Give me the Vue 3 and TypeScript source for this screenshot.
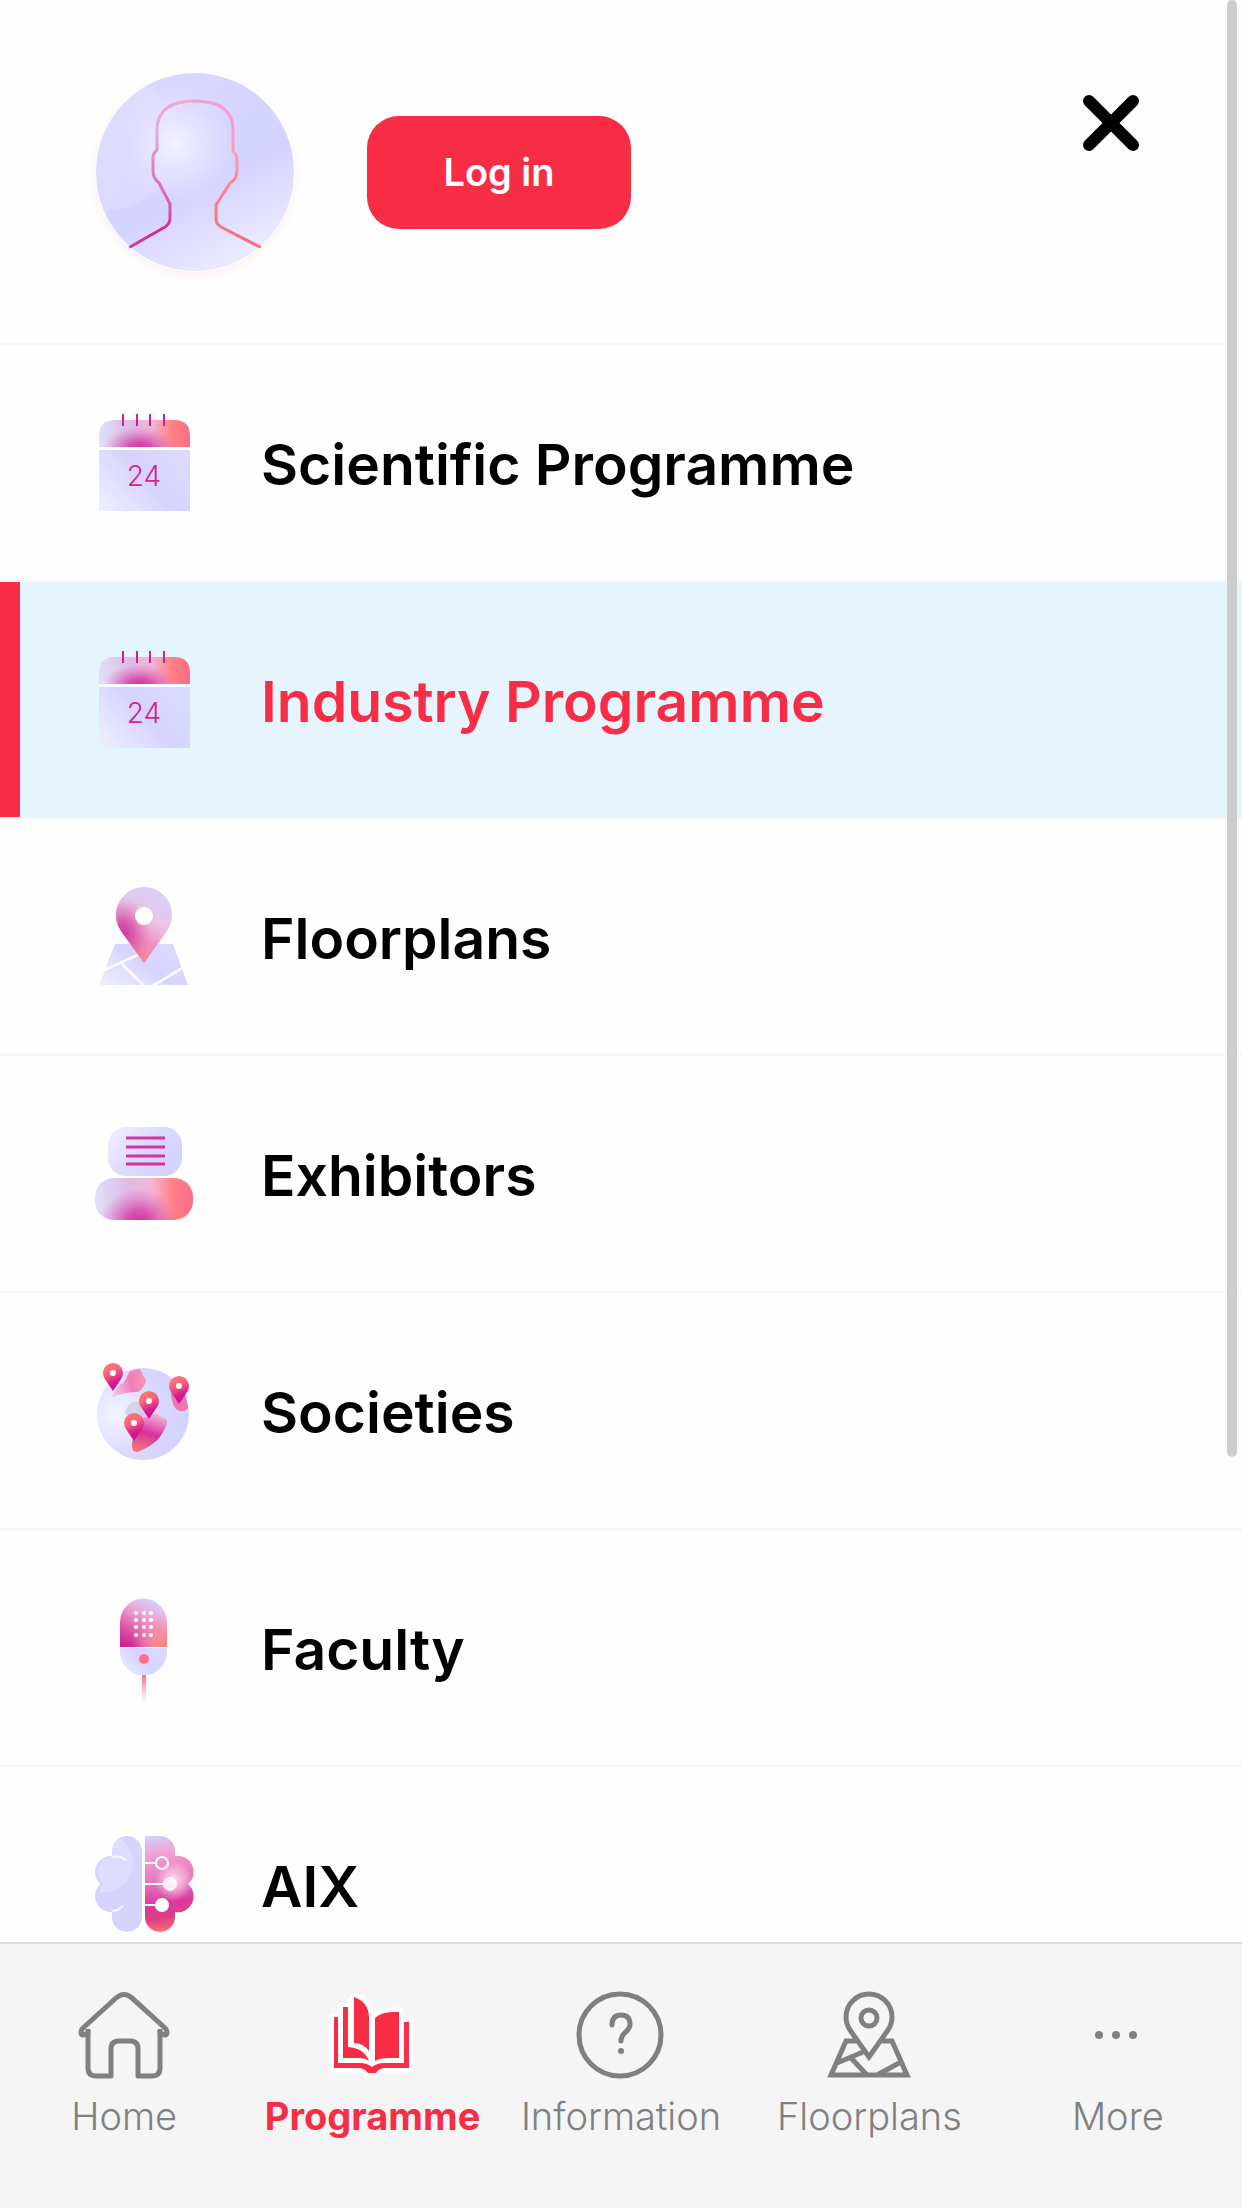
<script setup lang="ts">
import { ref } from 'vue'

interface MenuItem {
  label: string
  icon: string
}

const menu: MenuItem[] = [
  { label: 'Scientific Programme', icon: 'calendar' },
  { label: 'Industry Programme', icon: 'calendar' },
  { label: 'Floorplans', icon: 'map' },
  { label: 'Exhibitors', icon: 'booth' },
  { label: 'Societies', icon: 'globe' },
  { label: 'Faculty', icon: 'mic' },
  { label: 'AIX', icon: 'brain' },
]

const tabs = ['Home', 'Programme', 'Information', 'Floorplans', 'More']

const selected = ref('Industry Programme')
const activeTab = ref('Programme')

const micRows = [19, 26, 33, 41]
const micCols = [46, 54, 61]
const globePins = [
  [23, 16],
  [89, 29],
  [59, 44],
  [44, 66],
]
</script>

<template>
  <div class="app">
    <svg class="defs" aria-hidden="true">
      <defs>
        <linearGradient id="lilac" x1="0" y1="1" x2="1" y2="0.4">
          <stop offset="0" stop-color="#f0f0ff" />
          <stop offset="0.6" stop-color="#d6d4ff" />
          <stop offset="1" stop-color="#dad9ff" />
        </linearGradient>
        <linearGradient id="lilacTop" x1="0" y1="0" x2="1" y2="0.6">
          <stop offset="0" stop-color="#f1f1ff" />
          <stop offset="0.6" stop-color="#dad9ff" />
          <stop offset="1" stop-color="#d4d2ff" />
        </linearGradient>
        <linearGradient id="flare" x1="0" y1="0" x2="1" y2="0">
          <stop offset="0" stop-color="#dfe0f8" />
          <stop offset="0.35" stop-color="#dfb9e6" />
          <stop offset="0.58" stop-color="#f3b6d6" />
          <stop offset="0.8" stop-color="#ff8086" />
          <stop offset="1" stop-color="#f86f84" />
        </linearGradient>
        <radialGradient id="magenta" cx="0.45" cy="1.05" r="0.4" gradientTransform="matrix(1 0 0 2 0 -1.05)">
          <stop offset="0" stop-color="#d42a9c" />
          <stop offset="0.35" stop-color="#d43fa5" stop-opacity="0.8" />
          <stop offset="1" stop-color="#d96cba" stop-opacity="0" />
        </radialGradient>
        <linearGradient id="pinFill" x1="0.75" y1="0" x2="0.35" y2="1">
          <stop offset="0" stop-color="#d5d2fb" />
          <stop offset="0.4" stop-color="#eac5e8" />
          <stop offset="0.7" stop-color="#ee8fbd" />
          <stop offset="1" stop-color="#ff7f78" />
        </linearGradient>
        <radialGradient id="pinShade" cx="0.12" cy="0.62" r="0.5">
          <stop offset="0" stop-color="#cc2c9b" stop-opacity="0.9" />
          <stop offset="0.4" stop-color="#cf42a4" stop-opacity="0.65" />
          <stop offset="1" stop-color="#d96cba" stop-opacity="0" />
        </radialGradient>
        <linearGradient id="smallPin" x1="0.2" y1="0" x2="0.5" y2="1">
          <stop offset="0" stop-color="#ff7a6c" />
          <stop offset="0.35" stop-color="#f8667c" />
          <stop offset="0.75" stop-color="#d4178f" />
          <stop offset="1" stop-color="#c9138c" />
        </linearGradient>
        <linearGradient id="land" x1="0" y1="0.4" x2="1" y2="0.2">
          <stop offset="0" stop-color="#ecc5e8" />
          <stop offset="0.5" stop-color="#f07fb9" />
          <stop offset="1" stop-color="#fb94b4" />
        </linearGradient>
        <linearGradient id="landSouth" x1="0.5" y1="0" x2="0.25" y2="1">
          <stop offset="0" stop-color="#f3b3d8" />
          <stop offset="0.5" stop-color="#dc2e9b" />
          <stop offset="0.75" stop-color="#dc5c8e" />
          <stop offset="1" stop-color="#ff7470" />
        </linearGradient>
        <radialGradient id="globeFill" cx="0.2" cy="0.5" r="0.8">
          <stop offset="0" stop-color="#f4f4ff" />
          <stop offset="0.6" stop-color="#d9d8ff" />
          <stop offset="1" stop-color="#d3d1ff" />
        </radialGradient>
        <linearGradient id="micFill" x1="0.1" y1="1" x2="0.6" y2="0">
          <stop offset="0" stop-color="#cb1d8f" />
          <stop offset="0.35" stop-color="#df5ca8" />
          <stop offset="0.7" stop-color="#eaa6d4" />
          <stop offset="1" stop-color="#d6d0f8" />
        </linearGradient>
        <radialGradient id="micGlow" cx="0.95" cy="1" r="0.7">
          <stop offset="0" stop-color="#ff8272" />
          <stop offset="0.4" stop-color="#fd8f98" stop-opacity="0.8" />
          <stop offset="1" stop-color="#fba0c0" stop-opacity="0" />
        </radialGradient>
        <linearGradient id="stem" x1="0" y1="0" x2="0" y2="1">
          <stop offset="0" stop-color="#ff6a7c" />
          <stop offset="1" stop-color="#ff9aac" stop-opacity="0" />
        </linearGradient>
        <linearGradient id="brainFill" gradientUnits="userSpaceOnUse" x1="62" y1="5" x2="78" y2="102">
          <stop offset="0" stop-color="#d5d0fb" />
          <stop offset="0.2" stop-color="#f29fd2" />
          <stop offset="0.45" stop-color="#e878bd" />
          <stop offset="0.7" stop-color="#d93a9d" />
          <stop offset="0.84" stop-color="#e03c84" />
          <stop offset="1" stop-color="#ff7a70" />
        </linearGradient>
        <radialGradient id="brainGlow" gradientUnits="userSpaceOnUse" cx="84" cy="50" r="20">
          <stop offset="0" stop-color="#fff" stop-opacity="0.8" />
          <stop offset="1" stop-color="#fff" stop-opacity="0" />
        </radialGradient>
        <radialGradient id="avatarGlow" cx="0.4" cy="0.36" r="0.36">
          <stop offset="0" stop-color="#f3f2ff" />
          <stop offset="0.5" stop-color="#e3e2ff" stop-opacity="0.8" />
          <stop offset="1" stop-color="#d6d5ff" stop-opacity="0" />
        </radialGradient>
        <linearGradient id="avatarFill" x1="0.3" y1="0.1" x2="0.75" y2="0.95">
          <stop offset="0" stop-color="#d8d7ff" />
          <stop offset="0.55" stop-color="#d4d2ff" />
          <stop offset="1" stop-color="#ececff" />
        </linearGradient>
        <linearGradient id="avatarLeft" gradientUnits="userSpaceOnUse" x1="95" y1="30" x2="45" y2="175">
          <stop offset="0" stop-color="#f3a6d4" />
          <stop offset="0.25" stop-color="#e5aadd" />
          <stop offset="0.65" stop-color="#dd62b4" />
          <stop offset="0.85" stop-color="#cf2c99" />
          <stop offset="1" stop-color="#d03c90" />
        </linearGradient>
        <linearGradient id="avatarRight" gradientUnits="userSpaceOnUse" x1="110" y1="30" x2="140" y2="175">
          <stop offset="0" stop-color="#f3a0d0" />
          <stop offset="0.4" stop-color="#f79cba" />
          <stop offset="0.6" stop-color="#f8858e" />
          <stop offset="1" stop-color="#fb6a78" />
        </linearGradient>
        <clipPath id="brainLeftClip">
          <path d="M52 5H37a15 15 0 0 0-15 19v1a16 16 0 0 0-8 28a16 16 0 0 0 8 28v5a15 15 0 0 0 30 0z" />
        </clipPath>
        <clipPath id="avatarClip"><circle cx="100" cy="100" r="99" /></clipPath>
      </defs>
    </svg>

    <main class="drawer">
      <header class="profile">
        <svg class="avatar" viewBox="0 0 200 200" role="img" aria-label="Profile picture">
          <circle cx="100" cy="100" r="99" fill="url(#avatarFill)" />
          <g clip-path="url(#avatarClip)">
            <circle cx="8" cy="68" r="72" fill="#fff" opacity="0.15" />
            <circle cx="100" cy="100" r="99" fill="url(#avatarGlow)" />
          </g>
          <g fill="none" stroke-width="3" stroke-linecap="round" stroke-linejoin="round">
            <path stroke="url(#avatarLeft)" d="M35 175L70 155Q75 152 75 146V132L64 111Q58 106 58 99V86Q58 81 62 78V58C62 38 76 29 100 29" />
            <path stroke="url(#avatarRight)" d="M100 29C124 29 138 38 138 58V79Q142 83 142 88V99Q142 107 135 111L121 133V147Q121 152 126 155L165 175" />
          </g>
        </svg>
        <button class="login" type="button">Log in</button>
        <button class="close" type="button" aria-label="Close menu">
          <svg viewBox="0 0 56 56" fill="none" stroke="#000" stroke-width="12" stroke-linecap="round">
            <path d="M6 6L50 50M50 6L6 50" />
          </svg>
        </button>
      </header>

      <nav class="menu" aria-label="Sections">
        <a
          v-for="item in menu"
          :key="item.label"
          href="#"
          class="row"
          :class="{ selected: item.label === selected }"
          @click.prevent="selected = item.label"
        >
          <svg class="row-icon" viewBox="0 0 107 107" aria-hidden="true">
            <g v-if="item.icon === 'calendar'">
              <path d="M9 38V27Q9 11 25 11H84Q100 11 100 27V38Z" fill="url(#flare)" />
              <path d="M9 38V27Q9 11 25 11H84Q100 11 100 27V38Z" fill="url(#magenta)" />
              <rect x="9" y="38" width="92" height="3" fill="#fff" opacity="0.8" />
              <rect x="9" y="41" width="91" height="61" fill="url(#lilac)" />
              <path d="M33 5V17M47 5V17M60 5V17M74 5V17" stroke="#cf1f93" stroke-width="2" />
              <text x="54" y="77" class="day" text-anchor="middle">24</text>
            </g>
            <g v-else-if="item.icon === 'map'">
              <path d="M25 61H83L98 102H9Z" fill="url(#lilac)" />
              <path d="M12 88L50 71M32 81L54 103M61 104L94 84" stroke="#fff" stroke-width="3" opacity="0.85" />
              <path d="M54 80L31 48A28 28 0 1 1 77 48Z" fill="url(#pinFill)" />
              <path d="M54 80L31 48A28 28 0 1 1 77 48Z" fill="url(#pinShade)" />
              <circle cx="54" cy="33" r="9" fill="#fff" />
            </g>
            <g v-else-if="item.icon === 'booth'">
              <rect x="18" y="7" width="74" height="49" rx="18" fill="url(#lilacTop)" />
              <path d="M36 18H75M36 27H75M36 36H75M36 44H75" stroke="#d632a1" stroke-width="3" />
              <rect x="5" y="58" width="98" height="42" rx="19" fill="url(#flare)" />
              <rect x="5" y="58" width="98" height="42" rx="19" fill="url(#magenta)" />
            </g>
            <g v-else-if="item.icon === 'globe'">
              <circle cx="53" cy="57" r="46" fill="url(#globeFill)" />
              <path d="M22 40Q25 30 34 25L40 14Q46 12 50 12Q52 17 56 23Q54 33 47 35Q35 35 22 40Z" fill="url(#land)" />
              <path d="M81 36H95L98 50Q97 55 90 54Q82 52 81 36Z" fill="#ee77ad" />
              <path d="M35 56Q38 44 48 44L60 54L52 66Z" fill="#cbc9df" opacity="0.7" />
              <path d="M66 56L77 63Q78 68 70 80Q64 88 48 95Q41 96 42 86L50 62Z" fill="url(#landSouth)" />
              <g v-for="[x, y] in globePins" :key="x" :transform="`translate(${x} ${y})`">
                <path d="M0 18L-8 6A10 10 0 1 1 8 6Z" fill="url(#smallPin)" />
                <circle r="3" fill="#fff" />
              </g>
            </g>
            <g v-else-if="item.icon === 'mic'">
              <path d="M30 53V28A23 23 0 0 1 77 28V53Z" fill="url(#micFill)" />
              <path d="M30 53V28A23 23 0 0 1 77 28V53Z" fill="url(#micGlow)" />
              <path d="M30 54H77V58A23 23 0 0 1 30 58Z" fill="url(#lilac)" />
              <circle cx="54" cy="65" r="5" fill="#ff7287" />
              <rect x="52" y="81" width="4" height="28" fill="url(#stem)" />
              <template v-for="y in micRows" :key="y">
                <circle v-for="x in micCols" :key="x" :cx="x" :cy="y" r="2" fill="#fff" />
              </template>
            </g>
            <g v-else>
              <g fill="#d6d4ff">
                <rect x="22" y="5" width="30" height="96" rx="15" />
                <circle cx="21" cy="41" r="16" />
                <circle cx="21" cy="65" r="16" />
              </g>
              <circle cx="14" cy="32" r="29" fill="#fff" opacity="0.2" clip-path="url(#brainLeftClip)" />
              <path d="M22 26Q30 24 36 29M22 80Q28 80 33 75" stroke="#fff" stroke-width="2" fill="none" opacity="0.8" />
              <path d="M55 5H70A15 15 0 0 1 85 20V25A16 16 0 0 1 98 53A16 16 0 0 1 85 81V86A15 15 0 0 1 55 86Z" fill="url(#brainFill)" />
              <circle cx="82" cy="50" r="20" fill="url(#brainGlow)" />
              <g stroke="#fff" stroke-width="2" fill="none">
                <path d="M55 32H65M55 53H75M55 74H66" />
                <circle cx="72" cy="32" r="6" />
              </g>
              <circle cx="80" cy="53" r="7" fill="#fff" opacity="0.75" />
              <circle cx="72" cy="74" r="7" fill="#fff" />
            </g>
          </svg>
          <span class="row-label">{{ item.label }}</span>
        </a>
      </nav>
      <div class="scrollbar" aria-hidden="true"></div>
    </main>

    <nav class="tabs" aria-label="Main">
      <a
        v-for="tab in tabs"
        :key="tab"
        href="#"
        class="tab"
        :class="{ active: tab === activeTab }"
        @click.prevent="activeTab = tab"
      >
        <svg class="tab-icon" viewBox="0 0 92 86" fill="none" stroke="#808080" stroke-width="5" aria-hidden="true">
          <g v-if="tab === 'Home'">
            <path stroke-linecap="round" stroke-linejoin="round" d="M10 40L8 42Q3 45 3 40Q3 38 5 36L38 6Q46 -1 54 6L87 36Q89 38 89 40Q89 45 84 42L82 40" />
            <path stroke-linejoin="round" d="M10 37V76Q10 84 18 84H33V57Q33 49 41 49H52Q60 49 60 57V84H74Q82 84 82 76V37" />
          </g>
          <g v-else-if="tab === 'Programme'">
            <g stroke="#fff" stroke-width="9" stroke-linejoin="round" fill="#fff">
              <path d="M7 25H11V70H34Q40 70 45 75Q50 70 56 70H77V30H82V76H56Q51 76 49 81H41Q38 76 34 76H7Z" />
              <path d="M16 15H21L27 5Q41 9 42 25L48 26Q54 20 66 20H72V70H16Z" />
            </g>
            <g fill="#f72d46" stroke="none">
              <path d="M7 25H11V71H33Q40 71 45 75Q50 71 57 71H77V30H82V76H57Q51 77 49 81H41Q38 77 33 76H7Z" />
              <path d="M16 15H21V55Q37 56 42 69Q38 66 33 66H16Z" />
              <path d="M27 5Q42 10 42 26V59Q36 51 27 51Z" />
              <path d="M48 69V26Q54 20 66 20H72V66H62Q53 66 48 69Z" />
            </g>
          </g>
          <g v-else-if="tab === 'Information'">
            <circle cx="45" cy="43" r="41" />
            <path stroke-linecap="round" d="M37 33Q37 23 46 23Q55 23 55 32C55 41 46 39 46 49" />
            <circle cx="46" cy="59" r="3" fill="#808080" stroke="none" />
          </g>
          <g v-else-if="tab === 'Floorplans'">
            <path d="M46 65L27 38Q23 32 23 25A23 23 0 0 1 69 25Q69 32 65 38Z" />
            <circle cx="46" cy="26" r="8" />
            <path d="M33 49H23L8 83H84L69 49H59M14 71L40 60M28 66L44 83M54 83L78 70" />
          </g>
          <g v-else fill="#808080" stroke="none">
            <circle cx="27" cy="43" r="4" />
            <circle cx="44" cy="43" r="4" />
            <circle cx="61" cy="43" r="4" />
          </g>
        </svg>
        <span>{{ tab }}</span>
      </a>
    </nav>
  </div>
</template>

<style>
body {
  margin: 0;
  background: #fefefe;
}
</style>

<style scoped>
.app {
  display: flex;
  flex-direction: column;
  height: 100vh;
  font-family: Inter, "Liberation Sans", sans-serif;
  color: #000;
  background: #fefefe;
}

.defs {
  position: absolute;
  width: 0;
  height: 0;
}

.drawer {
  position: relative;
  flex: 1;
  min-height: 0;
  overflow: hidden;
}

.profile {
  display: flex;
  align-items: center;
  padding: 72px 103px 71px 95px;
  border-bottom: 2px solid #f7f7f7;
}

.avatar {
  width: 200px;
  height: 200px;
  border-radius: 50%;
  box-shadow: 0 3px 8px rgba(255, 150, 170, 0.15);
}

.login {
  margin-left: 72px;
  width: 264px;
  height: 113px;
  border: 0;
  border-radius: 32px;
  background: #f72d46;
  color: #fff;
  font: 600 38px/48px Inter, "Liberation Sans", sans-serif;
}

.close {
  align-self: flex-start;
  margin: 23px 0 0 auto;
  padding: 0;
  border: 0;
  background: none;
}

.close svg {
  display: block;
  width: 56px;
  height: 56px;
}

.row {
  display: flex;
  align-items: center;
  gap: 64px;
  padding: 64px 90px;
  border-bottom: 2px solid #f7f7f7;
  color: #000;
  font-size: 57px;
  font-weight: 600;
  line-height: 72px;
  text-decoration: none;
}

.row.selected {
  background: #e6f5fd;
  box-shadow: inset 20px 0 0 #f72d46;
  color: #f72d46;
}

.row-icon {
  flex: none;
  width: 107px;
  height: 107px;
  overflow: visible;
}

.row-label {
  padding-top: 4px;
}

.day {
  font-family: Inter, "Liberation Sans", sans-serif;
  font-size: 28px;
  font-weight: 300;
  fill: #cf2396;
}

.scrollbar {
  position: absolute;
  top: 0;
  right: 5px;
  width: 10px;
  height: 75%;
  border-radius: 5px;
  background: #cdcdcd;
}

.tabs {
  display: grid;
  grid-template-columns: repeat(5, 1fr);
  padding: 48px 0 66px;
  border-top: 2px solid #dcdcdc;
  background: #f5f5f5;
}

.tab {
  display: flex;
  flex-direction: column;
  align-items: center;
  gap: 13px;
  color: #808080;
  font-size: 38px;
  font-weight: 300;
  line-height: 51px;
  text-decoration: none;
}

.tab.active {
  color: #f72d46;
  font-weight: 700;
}

.tab-icon {
  width: 92px;
  height: 86px;
  overflow: visible;
}
</style>
